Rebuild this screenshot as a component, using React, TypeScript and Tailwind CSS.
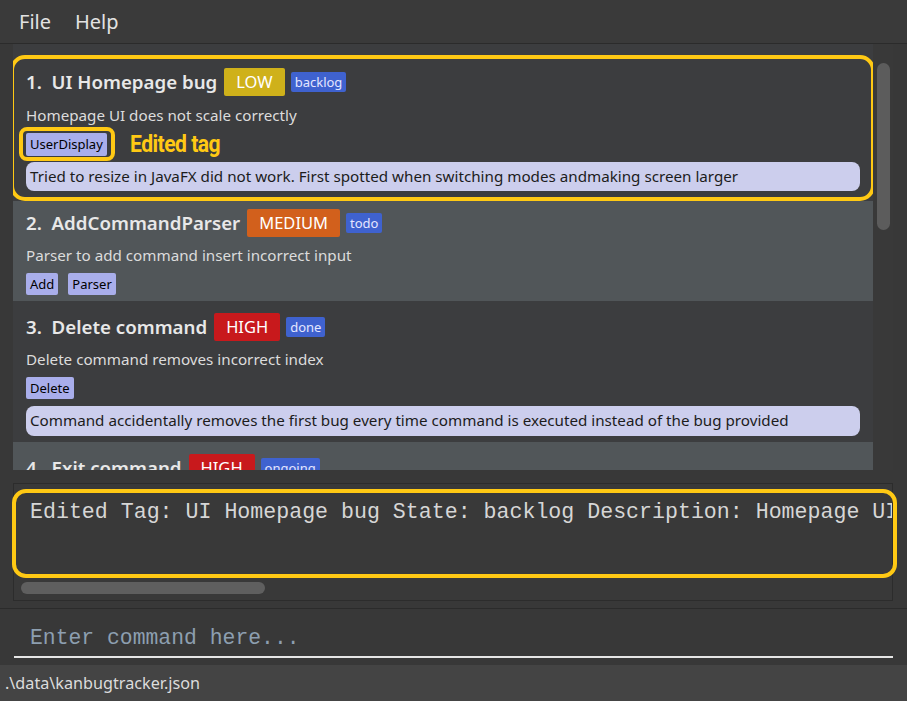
import React from 'react';

type Bug = {
  index: number;
  title: string;
  priority: 'LOW' | 'MEDIUM' | 'HIGH';
  state: string;
  description: string;
  tags: string[];
  note?: string;
};

const bugs: Bug[] = [
  {
    index: 1,
    title: 'UI Homepage bug',
    priority: 'LOW',
    state: 'backlog',
    description: 'Homepage UI does not scale correctly',
    tags: ['UserDisplay'],
    note: 'Tried to resize in JavaFX did not work. First spotted when switching modes andmaking screen larger',
  },
  {
    index: 2,
    title: 'AddCommandParser',
    priority: 'MEDIUM',
    state: 'todo',
    description: 'Parser to add command insert incorrect input',
    tags: ['Add', 'Parser'],
  },
  {
    index: 3,
    title: 'Delete command',
    priority: 'HIGH',
    state: 'done',
    description: 'Delete command removes incorrect index',
    tags: ['Delete'],
    note: 'Command accidentally removes the first bug every time command is executed instead of the bug provided',
  },
  {
    index: 4,
    title: 'Exit command',
    priority: 'HIGH',
    state: 'ongoing',
    description: 'Exit command does not close the window',
    tags: ['Exit'],
  },
];

const priorityColour = {
  LOW: 'bg-[#cfb11a]',
  MEDIUM: 'bg-[#d2601c]',
  HIGH: 'bg-[#c8191c]',
};

function BugCard({ bug, first }: { bug: Bug; first?: boolean }) {
  const light = bug.index % 2 === 0;
  return (
    <div
      className={`relative flex shrink-0 flex-col pl-[13px] pr-[13px] ${
        light ? 'bg-[#515659]' : 'bg-[#3c3d3f]'
      } ${first ? 'pt-[24px] pb-[10px]' : bug.index === 2 ? 'pt-[8px] pb-[6px]' : 'pt-[12px] pb-[6px]'}`}
    >
      {/* Title row */}
      <div className="flex h-[28px] items-center">
        <span className="whitespace-pre text-[18.7px] font-semibold leading-none text-[#e8e8e8]">
          {`${bug.index}.  ${bug.title}`}
        </span>
        <span
          className={`ml-[7px] flex h-[28px] items-center rounded-[2px] px-[12px] text-[16.5px] leading-none text-white ${priorityColour[bug.priority]}`}
        >
          {bug.priority}
        </span>
        <span className="ml-[6px] flex h-[20px] items-center rounded-[2px] bg-[#3f62cf] px-[4px] text-[13px] leading-none text-[#e4e6ff]">
          {bug.state}
        </span>
      </div>

      <div className={`${first ? 'mt-[9px]' : 'mt-[8px]'} h-[20px] text-[15.2px] leading-[20px] text-[#dcdcdc]`}>
        {bug.description}
      </div>

      {/* Tags */}
      <div className={`${first ? 'mt-[7px]' : 'mt-[8px]'} flex items-center gap-[10px]`}>
        {bug.tags.map((tag) =>
          first ? (
            <div key={tag} className="flex items-center">
              <span className="relative flex h-[23px] items-center rounded-[2px] bg-[#a9aeeb] px-[4px] text-[13px] leading-none text-black">
                {tag}
                <span className="absolute -bottom-[5px] -left-[7px] -right-[8px] -top-[6px] rounded-[8px] border-4 border-[#ffc914]" />
              </span>
              <span className="ml-[23px] origin-left scale-x-[0.88] font-['Roboto'] text-[24px] font-bold leading-none tracking-tight text-[#ffc914]">
                Edited tag
              </span>
            </div>
          ) : (
            <span
              key={tag}
              className="flex h-[22px] items-center rounded-[2px] bg-[#a9aeeb] px-[4px] text-[13px] leading-none text-black"
            >
              {tag}
            </span>
          )
        )}
      </div>

      {bug.note && (
        <div
          className={`${first ? 'mt-[6px] h-[29px]' : 'mt-[7px] h-[30px]'} flex items-center rounded-[8px] bg-[#ccceed] px-[4px] text-[15.2px] leading-none text-[#1c1c1c]`}
        >
          {bug.note}
        </div>
      )}

      {first && (
        <div className="pointer-events-none absolute -left-[3px] -right-[2px] bottom-0 top-[11px] rounded-[15px] border-4 border-[#ffc914]" />
      )}
    </div>
  );
}

export default function App() {
  return (
    <div className="flex h-[701px] w-[907px] flex-col overflow-hidden bg-[#383838] font-['Noto_Sans',sans-serif]">
      {/* Menu bar */}
      <div className="flex h-[44px] shrink-0 items-center gap-[24px] border-b border-[#2b2b2b] bg-[#3a3a3a] pl-[19px] text-[20px] text-[#e2e2e2]">
        <span>File</span>
        <span>Help</span>
      </div>

      {/* Bug list */}
      <div className="flex h-[426px] shrink-0 pl-[13px]">
        <div className="flex w-[860px] flex-col overflow-hidden">
          {bugs.map((bug, i) => (
            <BugCard key={bug.index} bug={bug} first={i === 0} />
          ))}
        </div>
        <div className="flex w-[20px] justify-center bg-[#393939] pt-[19px]">
          <div className="h-[167px] w-[13px] rounded-full bg-[#5c5c5c]" />
        </div>
      </div>

      {/* Result display */}
      <div className="mt-[13px] flex h-[118px] shrink-0 pl-[13px]">
        <div className="relative flex w-[880px] flex-col border border-[#2c2c2c] bg-[#393939]">
          <div className="h-[98px] overflow-hidden pl-[16px] pt-[14px]">
            <div className="w-[2000px] font-['Liberation_Mono',monospace] text-[21.6px] leading-[28px] text-[#d6d6d6]">
              Edited Tag: UI Homepage bug State: backlog Description: Homepage UI does not scale correctly
            </div>
          </div>
          <div className="pl-[7px]">
            <div className="h-[12px] w-[244px] rounded-full bg-[#5f5f5f]" />
          </div>
          <div className="pointer-events-none absolute -left-[2px] -right-[5px] bottom-[22px] top-[5px] rounded-[14px] border-4 border-[#ffc914]" />
        </div>
      </div>

      {/* Command box */}
      <div className="mt-[7px] flex h-[57px] shrink-0 flex-col border-t border-[#2b2b2b] bg-[#383838]">
        <div className="ml-[14px] flex h-[49px] w-[879px] items-end border-b-2 border-[#e6e6e6] pb-[7px] pl-[16px] font-['Liberation_Mono',monospace] text-[21.4px] leading-none text-[#8d9fb0]">
          Enter command here...
        </div>
      </div>

      {/* Status bar */}
      <div className="flex flex-1 items-center bg-[#444444] pl-[5px] text-[16.2px] text-[#dcdcdc]">
        .\data\kanbugtracker.json
      </div>
    </div>
  );
}
